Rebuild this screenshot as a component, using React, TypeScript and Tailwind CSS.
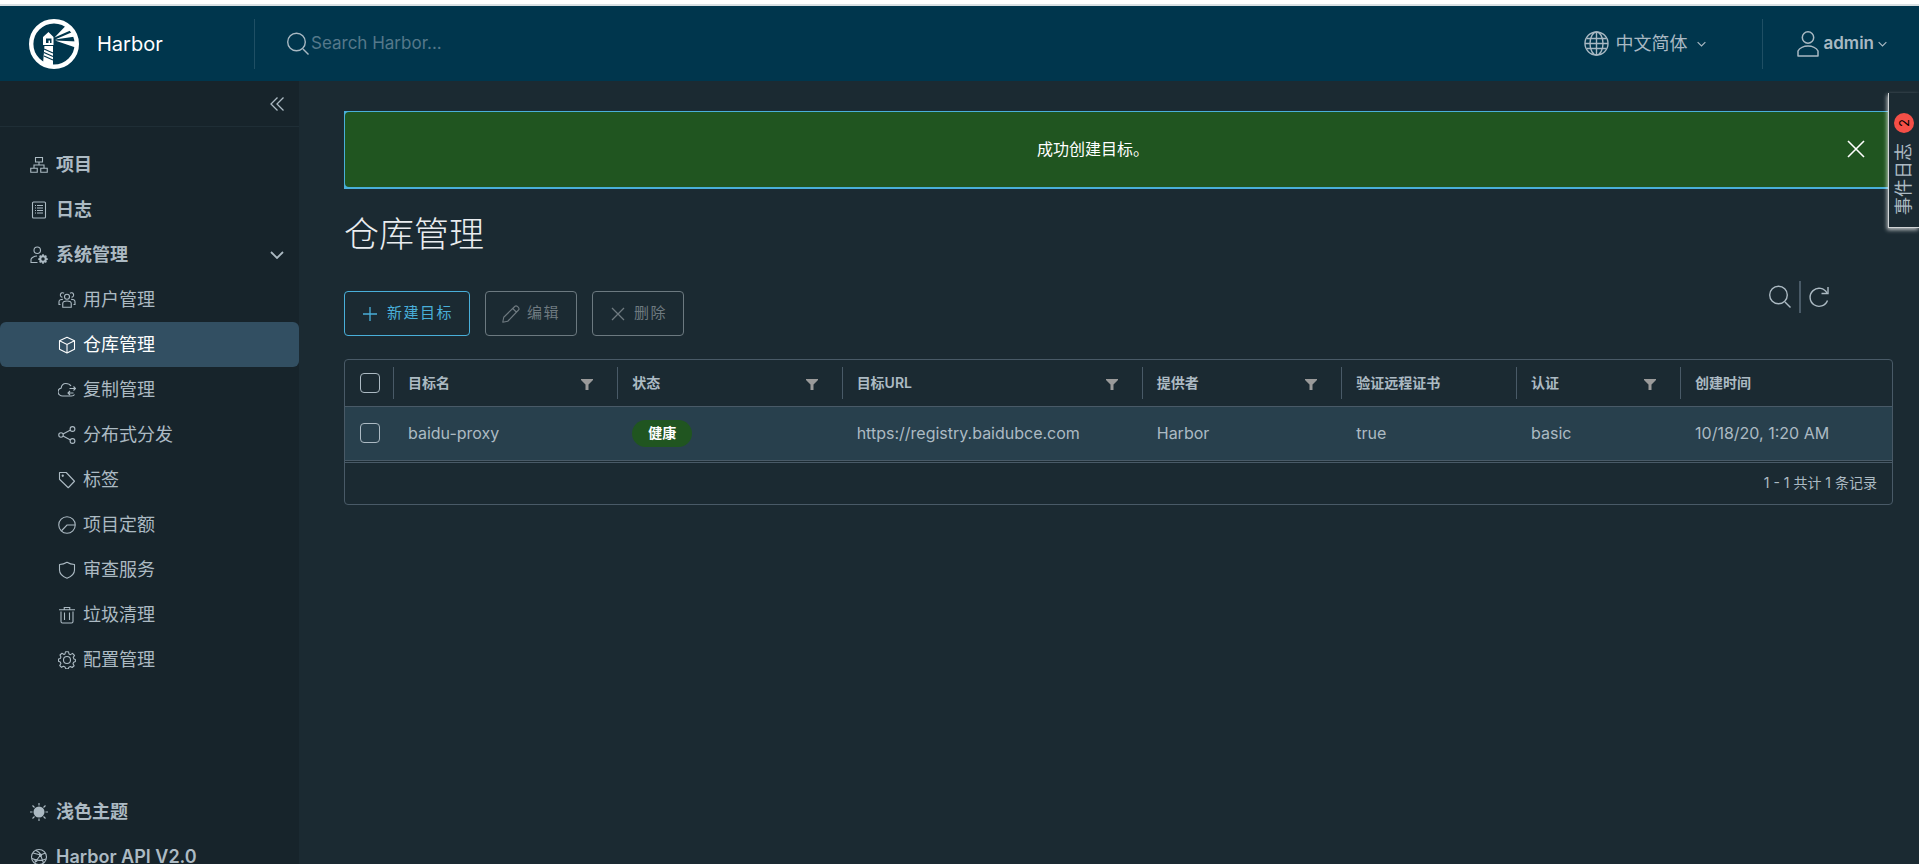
import type { ReactNode } from 'react';

type IconProps = { children: ReactNode; className?: string };

// 36-unit line icon, stroke follows the text colour
function Icon({ children, className = 'size-[18px]' }: IconProps) {
  return (
    <svg
      className={`shrink-0 ${className}`}
      viewBox="0 0 36 36"
      fill="none"
      stroke="currentColor"
      strokeWidth={2.2}
      aria-hidden="true"
    >
      {children}
    </svg>
  );
}

const icons = {
  projects: (
    <>
      <path d="M11 3h14v9H11zM1.5 24.5h13v8h-13zM21.5 24.5h13v8h-13z" />
      <path d="M18 12v6M8 24v-6h20v6" />
    </>
  ),
  logs: (
    <>
      <rect x="5" y="2" width="26" height="32" rx="2" />
      <path d="M10 9h2M10 14h2M10 19h2M10 24h2M14 9h12M14 14h12M14 19h12M14 24h12" />
    </>
  ),
  admin: (
    <>
      <circle cx="14.5" cy="8.5" r="6.5" />
      <path d="M15 33H2v-6c0-3 6-7 12-7" />
      <circle cx="26" cy="26" r="5.5" strokeWidth="4" />
      <path
        d="M26 16.5v4M26 31.5v4M16.5 26h4M31.5 26h4M19.3 19.3l3 3M29.7 29.7l3 3M32.7 19.3l-3 3M22.3 29.7l-3 3"
        strokeWidth="3.5"
      />
    </>
  ),
  users: (
    <>
      <circle cx="18" cy="11.5" r="5" />
      <path d="M9.5 32.5V25c0-3 4-5 8.5-5s8.5 2 8.5 5v7.5z" />
      <path d="M12 4.5a4.5 4.5 0 1 0-3 8M24 4.5a4.5 4.5 0 1 1 3 8" />
      <path d="M10 16.5c-5 0-8 2-8 5V27h3M26 16.5c5 0 8 2 8 5V27h-3" />
    </>
  ),
  registry: (
    <>
      <path d="M18 2.5l15 7v17L18 34 3 26.5v-17z" strokeLinejoin="round" />
      <path d="M3 9.5L18 17l15-7.5M18 17v17" />
    </>
  ),
  replication: (
    <>
      <path d="M23 15h12M31 11l4 4-4 4M31 24H20M24 20l-4 4 4 4" />
      <path d="M26 10C24 7 20 5 15.5 5 10 5 6.5 9 6.5 14 3 15 0 18 0 21.5 0 27 5 30 9 30h18c3 0 5-1 6-3" />
    </>
  ),
  share: (
    <>
      <circle cx="6" cy="18" r="4.5" />
      <circle cx="29" cy="6" r="4.8" />
      <circle cx="29" cy="30" r="4.8" />
      <path d="M10 16l15-8M10 20l15 8" />
    </>
  ),
  tag: (
    <>
      <path d="M3 3h13.5L33 20.5 20.5 33.5 3 16.5z" strokeLinejoin="round" />
      <circle cx="9.5" cy="9.5" r="1.2" />
    </>
  ),
  quota: (
    <>
      <circle cx="18" cy="18" r="16.5" />
      <path d="M34 18H18L7 29.5" />
    </>
  ),
  shield: (
    <path
      d="M18 2.5c4.5 3 9 4.5 15 4.5v11c0 8-6 13-15 16.5C9 31 3 26 3 18V7c6 0 10.5-1.5 15-4.5z"
      strokeLinejoin="round"
    />
  ),
  trash: (
    <>
      <path d="M2 7.5h32M12.5 7V3h11v4" />
      <path d="M6 11v20c0 2 1 3 3 3h18c2 0 3-1 3-3V11" />
      <path d="M13 13v15M23 13v15" />
    </>
  ),
  gear: (
    <>
      <circle cx="18" cy="18" r="7" />
      <path
        d="M15 1.5h6l1 4.5 3 1.3 4-2.5 4 4-2.5 4 1.3 3.2 3 1v4l-3.5 1.5-1.3 3 2.3 4-4 3.5-3.5-2-3 1.3-1.3 3.2h-5L14 31.8l-3-1.3-4 2.2L3.5 29l2.3-4-1.3-3L1 20.5V16l3.5-1 1.3-3L4 8l4-3.5 4 2.3 2-1z"
        strokeLinejoin="round"
      />
    </>
  ),
  sun: (
    <>
      <circle cx="18" cy="18" r="11" fill="currentColor" stroke="none" />
      <path d="M18 0v5M18 31v5M0 18h5M31 18h5M5 5l4 4M27 27l4 4M31 5l-4 4M9 27l-4 4" />
    </>
  ),
  api: (
    <>
      <circle cx="18" cy="18" r="15" />
      <path d="M6 10l15 4 10-4M21 14L10 29M21 14l6 16M4 21c8 4 18 5 28 1M12 5c5 2 8 5 9 9" />
      <circle cx="21" cy="14" r="2" />
      <circle cx="12" cy="25" r="2" />
    </>
  ),
};

const mainItems = [
  { label: '项目', icon: icons.projects },
  { label: '日志', icon: icons.logs },
];

const adminItems = [
  { label: '用户管理', icon: icons.users },
  { label: '仓库管理', icon: icons.registry, active: true },
  { label: '复制管理', icon: icons.replication },
  { label: '分布式分发', icon: icons.share },
  { label: '标签', icon: icons.tag },
  { label: '项目定额', icon: icons.quota },
  { label: '审查服务', icon: icons.shield },
  { label: '垃圾清理', icon: icons.trash },
  { label: '配置管理', icon: icons.gear },
];

const columns = [
  { label: '目标名', filter: true, width: 'w-[14.5%]' },
  { label: '状态', filter: true, width: 'w-[14.5%]' },
  { label: '目标URL', filter: true, width: 'w-[19.4%]' },
  { label: '提供者', filter: true, width: 'w-[12.9%]' },
  { label: '验证远程证书', filter: false, width: 'w-[11.3%]' },
  { label: '认证', filter: true, width: 'w-[10.6%]' },
  { label: '创建时间', filter: false, width: '' },
];

const registries = [
  {
    name: 'baidu-proxy',
    status: '健康',
    url: 'https://registry.baidubce.com',
    provider: 'Harbor',
    verify: 'true',
    auth: 'basic',
    created: '10/18/20, 1:20 AM',
  },
];

function Chevron({ className }: { className: string }) {
  return (
    <svg className={`shrink-0 ${className}`} viewBox="0 0 14 8" fill="none" stroke="currentColor" strokeWidth={1.8} aria-hidden="true">
      <path d="M1 1l6 6 6-6" />
    </svg>
  );
}

function SearchIcon() {
  return (
    <svg className="h-6 w-[22px] shrink-0" viewBox="0 0 22 24" fill="none" stroke="currentColor" strokeWidth={1.4} aria-hidden="true">
      <circle cx="9.5" cy="10" r="8.8" />
      <path d="M16 17l5.5 5.5" />
    </svg>
  );
}

function HarborLogo() {
  return (
    <svg className="size-[50px] shrink-0" viewBox="0 0 50 50" aria-hidden="true">
      <circle cx="25" cy="25" r="22.8" fill="none" stroke="#fff" strokeWidth="4.4" />
      {/* tower */}
      <path d="M14 18l5.5-5 5 5v8H24v21l-10-2 1.5-19H14z" fill="#fff" />
      <path d="M17 19.5h5.5V24H21v-2.5h-1.5V24H17z" fill="#00364d" />
      <path d="M15 26.5h9" stroke="#00364d" strokeWidth="1" />
      <path d="M15 30l9 4M15 33.5l9 4M15 37l9 4" stroke="#00364d" strokeWidth="1.3" />
      {/* light beams */}
      <path d="M25.5 18.5L37 6.5l5.5 4.5zM26 20.5L43.5 13l3 4.5zM26 21.5l22 1v6.5z" fill="#fff" />
    </svg>
  );
}

function Header() {
  return (
    <header className="flex h-[75px] shrink-0 items-center bg-[#00364d] text-[#a9b9c3]">
      <a href="#" className="flex w-[254px] shrink-0 items-center gap-[18px] pl-[29px] text-xl text-white">
        <HarborLogo />
        Harbor
      </a>
      <label className="flex h-[50px] grow items-center border-l border-[#1f4f64] pl-8">
        <SearchIcon />
        <input
          type="text"
          aria-label="Search Harbor"
          placeholder="Search Harbor..."
          className="grow bg-transparent pl-0.5 text-[17px] outline-none placeholder:text-[#55788a]"
        />
      </label>
      <button type="button" className="flex h-[50px] items-center gap-1.5 pr-14 text-lg">
        <svg className="size-[25px]" viewBox="0 0 25 25" fill="none" stroke="currentColor" strokeWidth={1.4} aria-hidden="true">
          <circle cx="12.5" cy="12.5" r="11.5" />
          <ellipse cx="12.5" cy="12.5" rx="6.5" ry="11.5" />
          <path d="M12.5 1v23M3 7.5h19M1 12.5h23M3 17.5h19" />
        </svg>
        中文简体
        <Chevron className="ml-1 h-1.5 w-[9px]" />
      </button>
      <button type="button" className="flex h-[50px] items-center gap-1 border-l border-[#1f4f64] pr-8 pl-[34px] text-[17px] font-semibold">
        <svg className="h-[26px] w-[22px]" viewBox="0 0 22 26" fill="none" stroke="currentColor" strokeWidth={1.5} aria-hidden="true">
          <circle cx="11" cy="6.5" r="5.7" />
          <path d="M1 25v-5c1.5-3 6-5 10-5s8.5 2 10 5v5z" strokeLinejoin="round" />
        </svg>
        admin
        <Chevron className="h-1.5 w-[9px]" />
      </button>
    </header>
  );
}

function Sidebar() {
  return (
    <nav className="flex w-[299px] shrink-0 flex-col overflow-hidden bg-[#17242b] text-lg text-[#acbac3]">
      <div className="flex h-[46px] shrink-0 items-center justify-end border-b border-[#1f2e36] pr-[15px]">
        <button type="button" aria-label="收起">
          <svg className="size-[14px]" viewBox="0 0 14 14" fill="none" stroke="currentColor" strokeWidth={1.3} aria-hidden="true">
            <path d="M7.5 .5L1 7l6.5 6.5M13.5 .5L7 7l6.5 6.5" />
          </svg>
        </button>
      </div>

      <div className="mt-[15px] shrink-0">
        {mainItems.map((item) => (
          <a key={item.label} href="#" className="flex h-[45px] items-center gap-2 pl-[30px] font-bold">
            <Icon>{item.icon}</Icon>
            {item.label}
          </a>
        ))}
        <button type="button" className="flex h-[45px] w-full items-center gap-2 pr-[15px] pl-[30px] font-bold">
          <Icon>{icons.admin}</Icon>
          系统管理
          <Chevron className="ml-auto h-2 w-[14px]" />
        </button>
        {adminItems.map((item) => (
          <a
            key={item.label}
            href="#"
            className={`flex h-[45px] items-center gap-[7px] pl-[58px] ${item.active ? 'rounded-md bg-[#324f62] text-white' : ''}`}
          >
            <Icon>{item.icon}</Icon>
            {item.label}
          </a>
        ))}
      </div>

      <div className="mt-[107px] shrink-0 font-bold">
        <button type="button" className="flex h-[45px] w-full items-center gap-2 pl-[30px]">
          <Icon>{icons.sun}</Icon>
          浅色主题
        </button>
        <a href="#" className="flex h-[45px] items-center gap-2 pl-[30px] font-semibold">
          <Icon>{icons.api}</Icon>
          Harbor API V2.0
        </a>
      </div>
    </nav>
  );
}

function Toolbar() {
  const button = 'flex h-[45px] items-center rounded border px-4 text-[15px] tracking-widest';
  return (
    <div className="mt-8 flex items-start justify-between">
      <div className="flex gap-[15px]">
        <button type="button" className={`${button} gap-2 border-[#49afd9] text-[#49afd9]`}>
          <svg className="size-[18px]" viewBox="0 0 18 18" stroke="currentColor" strokeWidth={1.3} aria-hidden="true">
            <path d="M9 2v14M2 9h14" />
          </svg>
          新建目标
        </button>
        <button type="button" disabled className={`${button} gap-[7px] border-[#6c7980] text-[#6f7a80]`}>
          <Icon>
            <path d="M1.5 34.5l2-10L26 2.5c3-3 10 4 7.5 7L11.5 32.5zM21.5 7l7.5 7.5" strokeLinejoin="round" />
          </Icon>
          编辑
        </button>
        <button type="button" disabled className={`${button} gap-[7px] border-[#6c7980] text-[#6f7a80]`}>
          <svg className="size-[18px]" viewBox="0 0 18 18" stroke="currentColor" strokeWidth={1.3} aria-hidden="true">
            <path d="M3 3l12 12M15 3L3 15" />
          </svg>
          删除
        </button>
      </div>
      <div className="mr-[62px] -mt-2.5 flex items-center gap-2">
        <button type="button" aria-label="搜索">
          <SearchIcon />
        </button>
        <span className="h-8 w-0.5 bg-[#495a67]" />
        <button type="button" aria-label="刷新">
          <svg className="size-[22px]" viewBox="0 0 22 22" fill="none" stroke="currentColor" strokeWidth={1.4} aria-hidden="true">
            <path d="M18.5 14.5A9 9 0 1 1 18 7" />
            <path d="M19 1v6.5h-6.5" />
          </svg>
        </button>
      </div>
    </div>
  );
}

function CheckBox({ label }: { label: string }) {
  return (
    <input
      type="checkbox"
      aria-label={label}
      className="block size-5 appearance-none rounded border border-[#acbac3] bg-transparent"
    />
  );
}

function RegistryTable() {
  return (
    <div className="mt-[23px] rounded border border-[#495a67]">
      <table className="w-full table-fixed border-collapse text-left">
        <thead>
          <tr className="h-[46px] border-b border-[#495a67] text-sm">
            <th className="w-12 pl-[15px]">
              <CheckBox label="全选" />
            </th>
            {columns.map((column) => (
              <th key={column.label} className={`font-semibold ${column.width}`}>
                <div className="flex h-8 items-center justify-between border-l border-[#495a67] pr-6 pl-[14px]">
                  {column.label}
                  {column.filter && (
                    <button type="button" aria-label={`筛选 ${column.label}`}>
                      <svg className="mt-1 h-[11px] w-3" viewBox="0 0 12 11" fill="#9a9a9a" aria-hidden="true">
                        <path d="M0 0h12v1L7.5 5.5V11h-3V5.5L0 1z" />
                      </svg>
                    </button>
                  )}
                </div>
              </th>
            ))}
          </tr>
        </thead>
        <tbody>
          {registries.map((registry) => (
            <tr key={registry.name} className="h-[54px] border-b border-[#495a67] bg-[#28404d] text-base [&>td]:pl-[15px]">
              <td>
                <CheckBox label={registry.name} />
              </td>
              <td>{registry.name}</td>
              <td>
                <span className="flex h-[27px] w-fit items-center rounded-full bg-[#205520] px-4 text-sm font-bold text-white">
                  {registry.status}
                </span>
              </td>
              <td>{registry.url}</td>
              <td>{registry.provider}</td>
              <td>{registry.verify}</td>
              <td>{registry.auth}</td>
              <td>{registry.created}</td>
            </tr>
          ))}
        </tbody>
      </table>
      <div className="mt-px flex h-[42px] items-center justify-end border-t border-[#495a67] pr-[15px] text-sm">
        1 - 1 共计 1 条记录
      </div>
    </div>
  );
}

export default function App() {
  return (
    <div className="relative flex h-screen flex-col overflow-hidden border-t-4 border-white bg-[#1b2a32] font-['Inter','Noto_Sans_CJK_SC',sans-serif] text-[#acbac3]">
      <div className="h-0.5 shrink-0 bg-[#d9e0e3]" />
      <Header />
      <div className="flex min-h-0 grow">
        <Sidebar />
        <main className="min-w-0 grow pt-[30px] pr-[26px] pl-[45px]">
          <div role="alert" className="border border-b-2 border-[#49afd9] bg-[#49afd9]">
            <div className="flex h-[75px] items-center rounded bg-[#205520] pr-[27px] pb-0.5 text-base text-white">
              <span className="grow pr-1.5 text-center">成功创建目标。</span>
              <button type="button" aria-label="关闭">
                <svg className="size-[18px]" viewBox="0 0 18 18" stroke="currentColor" strokeWidth={1.6} aria-hidden="true">
                  <path d="M1 1l16 16M17 1L1 17" />
                </svg>
              </button>
            </div>
          </div>
          <h1 className="mt-5 text-[35px] leading-[50px] font-light text-[#eaedf0]">仓库管理</h1>
          <Toolbar />
          <RegistryTable />
        </main>
      </div>

      {/* Event log tab pinned to the right edge, turned round so it reads upwards */}
      <button
        type="button"
        className="absolute top-[89px] right-0 flex h-[135px] w-[31px] rotate-180 items-center justify-between border-t border-r border-white/80 bg-[#1b2a32] pt-3 pb-5 text-lg leading-none shadow-[1px_-2px_4px_#ffffffb0] [text-orientation:sideways] [writing-mode:vertical-rl]"
      >
        事件日志
        <span className="flex size-5 items-center justify-center rounded-full bg-[#f54f47] text-[13px] text-black">2</span>
      </button>
    </div>
  );
}
